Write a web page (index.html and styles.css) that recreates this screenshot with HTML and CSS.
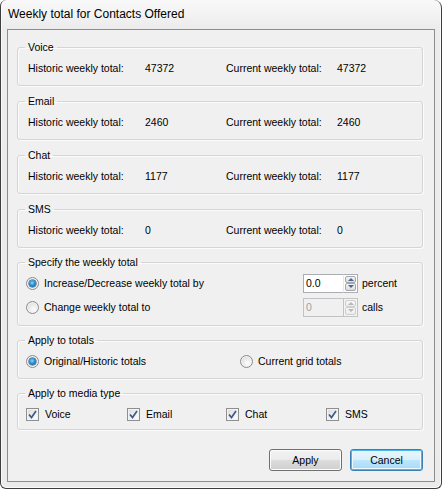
FILE: index.html
```html
<!DOCTYPE html>
<html>
<head>
<meta charset="utf-8">
<link rel="stylesheet" href="styles.css">
</head>
<body>
<div class="window">
  <div class="titlebar">Weekly total for Contacts Offered</div>
  <div class="client">
    <fieldset class="group">
      <legend>Voice</legend>
      <div class="totals"><span class="l1">Historic weekly total:</span><span class="v1">47372</span><span class="l2">Current weekly total:</span><span>47372</span></div>
    </fieldset>
    <fieldset class="group">
      <legend>Email</legend>
      <div class="totals"><span class="l1">Historic weekly total:</span><span class="v1">2460</span><span class="l2">Current weekly total:</span><span>2460</span></div>
    </fieldset>
    <fieldset class="group">
      <legend>Chat</legend>
      <div class="totals"><span class="l1">Historic weekly total:</span><span class="v1">1177</span><span class="l2">Current weekly total:</span><span>1177</span></div>
    </fieldset>
    <fieldset class="group sms">
      <legend>SMS</legend>
      <div class="totals"><span class="l1">Historic weekly total:</span><span class="v1">0</span><span class="l2">Current weekly total:</span><span>0</span></div>
    </fieldset>
    <fieldset class="group specify">
      <legend>Specify the weekly total</legend>
      <div class="opt-row">
        <label class="opt"><span class="radio checked"></span><span>Increase/Decrease weekly total by</span></label>
        <span class="spin"><span class="spin-field">0.0</span><span class="spin-btns"><span class="spin-btn"><span class="arrow up"></span></span><span class="spin-btn"><span class="arrow down"></span></span></span></span>
        <span class="unit">percent</span>
      </div>
      <div class="opt-row">
        <label class="opt"><span class="radio"></span><span>Change weekly total to</span></label>
        <span class="spin disabled"><span class="spin-field">0</span><span class="spin-btns"><span class="spin-btn"><span class="arrow up"></span></span><span class="spin-btn"><span class="arrow down"></span></span></span></span>
        <span class="unit">calls</span>
      </div>
    </fieldset>
    <fieldset class="group applyto">
      <legend>Apply to totals</legend>
      <div class="radio-row">
        <label class="opt first"><span class="radio checked"></span><span>Original/Historic totals</span></label>
        <label class="opt"><span class="radio"></span><span>Current grid totals</span></label>
      </div>
    </fieldset>
    <fieldset class="group media">
      <legend>Apply to media type</legend>
      <div class="check-row">
        <label class="chk"><span class="check"><svg width="11" height="11" viewBox="0 0 11 11"><path d="M2 5.5 L4.5 8.5 L9 2" fill="none" stroke="#3d5a8c" stroke-width="1.7"/></svg></span><span>Voice</span></label>
        <label class="chk"><span class="check"><svg width="11" height="11" viewBox="0 0 11 11"><path d="M2 5.5 L4.5 8.5 L9 2" fill="none" stroke="#3d5a8c" stroke-width="1.7"/></svg></span><span>Email</span></label>
        <label class="chk"><span class="check"><svg width="11" height="11" viewBox="0 0 11 11"><path d="M2 5.5 L4.5 8.5 L9 2" fill="none" stroke="#3d5a8c" stroke-width="1.7"/></svg></span><span>Chat</span></label>
        <label class="chk"><span class="check"><svg width="11" height="11" viewBox="0 0 11 11"><path d="M2 5.5 L4.5 8.5 L9 2" fill="none" stroke="#3d5a8c" stroke-width="1.7"/></svg></span><span>SMS</span></label>
      </div>
    </fieldset>
    <div class="buttons">
      <button class="btn">Apply</button>
      <button class="btn default">Cancel</button>
    </div>
  </div>
</div>
</body>
</html>
```

FILE: styles.css
```css
* { box-sizing: border-box; }
html, body { margin: 0; padding: 0; background: #ffffff; }
body {
  font-family: "Liberation Sans", Arial, sans-serif;
  font-size: 10.5px;
  color: #000;
}
.window {
  width: 442px;
  height: 489px;
  border: 1px solid #3e3e3e;
  border-top: none;
  border-radius: 6px 8px 6px 6px;
  background: linear-gradient(#f9f9f9 0px, #ececec 28px, #ebebeb 100%);
  box-shadow: inset 1px 0 0 #fafafa, inset -1px 0 0 #fafafa, inset 0 -1px 0 #fafafa;
  display: flex;
  flex-direction: column;
  padding: 0 6px 6px 6px;
}
.titlebar {
  height: 29px;
  padding: 7px 0 0 1px;
  font-size: 12px;
  line-height: 15px;
  color: #000;
}
.client {
  flex: 1;
  border: 1px solid #8d8d8d;
  background: #f0f0f0;
  padding: 11px 11px 0 9px;
  display: flex;
  flex-direction: column;
}
.group {
  margin: 0 0 9px 0;
  padding: 8px 0 10px 0;
  border: 1px solid #d5d5d5;
  border-radius: 3px;
  box-shadow: inset 1px 1px 0 #fbfbfb, 1px 1px 0 #fbfbfb;
  min-width: 0;
}
.group.sms { margin-bottom: 8px; }
.group legend {
  margin-left: 7px;
  padding: 0 3px;
  line-height: 13px;
  font-size: 10.5px;
}
.totals {
  display: flex;
  line-height: 13px;
  padding-left: 10px;
}
.totals .l1 { width: 117px; }
.totals .v1 { width: 81px; }
.totals .l2 { width: 111px; }

.specify { padding: 4px 0 8px 0; margin-bottom: 8px; }
.opt-row {
  display: flex;
  align-items: center;
  height: 20px;
  padding-left: 8px;
}
.opt-row + .opt-row { margin-top: 4px; }
.opt {
  display: flex;
  align-items: center;
  gap: 5px;
}
.opt-row .opt { width: 277px; }
.radio {
  width: 13px;
  height: 13px;
  border-radius: 50%;
  border: 1px solid #8b8c8c;
  background: radial-gradient(circle at 60% 65%, #fdfdfd 0%, #e6e6e6 55%, #cfcfcf 100%);
  box-shadow: inset 0 0 0 1px #f4f4f4;
  display: flex;
  align-items: center;
  justify-content: center;
  flex: none;
}
.radio.checked::after {
  content: "";
  width: 7px;
  height: 7px;
  border-radius: 50%;
  background: radial-gradient(circle at 45% 40%, #8fd4fa 0%, #2d8fd4 45%, #0c4c86 100%);
  box-shadow: 0 0 0 0.5px #1b4f7d;
}
.spin {
  display: flex;
  height: 19px;
}
.spin-field {
  width: 40px;
  height: 19px;
  border: 1px solid #abadb3;
  border-right: none;
  background: #fff;
  padding: 2px 0 0 2px;
  line-height: 13px;
}
.spin-btns {
  width: 15px;
  height: 19px;
  border: 1px solid #abadb3;
  border-left: 1px solid #e3e9ef;
  background: #fff;
  display: flex;
  flex-direction: column;
  padding: 1px;
}
.spin-btn {
  flex: 1;
  border: 1px solid #a3a6ab;
  border-radius: 2px;
  background: linear-gradient(#f4f4f4, #dcdcdc);
  display: flex;
  align-items: center;
  justify-content: center;
}
.arrow {
  width: 0;
  height: 0;
  border-left: 3px solid transparent;
  border-right: 3px solid transparent;
}
.arrow.up { border-bottom: 3px solid #4e6690; }
.arrow.down { border-top: 3px solid #4e6690; }
.spin.disabled .spin-field {
  background: #f0f0f0;
  color: #a0a0a0;
  border-color: #c3c3c3;
}
.spin.disabled .spin-btns { border-color: #c3c3c3; background: #f4f4f4; }
.spin.disabled .spin-btn { border-color: #cfcfcf; background: linear-gradient(#f7f7f7, #ececec); }
.spin.disabled .arrow.up { border-bottom-color: #b8b8b8; }
.spin.disabled .arrow.down { border-top-color: #b8b8b8; }
.unit { margin-left: 4px; }

.applyto { padding: 7px 0 10px 0; margin-bottom: 8px; }
.radio-row {
  display: flex;
  align-items: center;
  height: 14px;
  padding-left: 8px;
}
.radio-row .first { width: 214px; }

.media { padding: 7px 0 8px 0; }
.check-row {
  display: grid;
  grid-template-columns: 101px 99px 100px auto;
  align-items: center;
  height: 14px;
  padding-left: 8px;
}
.chk {
  display: flex;
  align-items: center;
  gap: 6px;
}
.check {
  width: 13px;
  height: 13px;
  border: 1px solid #8e8f8f;
  background: linear-gradient(135deg, #d9d9d9, #f6f6f6 70%, #ffffff);
  box-shadow: inset 0 0 0 1px #f2f2f2;
  display: flex;
  align-items: center;
  justify-content: center;
  flex: none;
}
.check svg { display: block; }

.buttons {
  display: flex;
  justify-content: flex-end;
  gap: 8px;
  margin-top: 10px;
}
.btn {
  width: 73px;
  height: 22px;
  border: 1px solid #707070;
  border-radius: 3px;
  font-family: "Liberation Sans", Arial, sans-serif;
  font-size: 10.5px;
  color: #000;
  padding: 0;
  background: linear-gradient(#f2f2f2 0%, #ebebeb 50%, #dddddd 51%, #cfcfcf 100%);
  box-shadow: inset 0 0 0 1px #fcfcfc;
}
.btn.default {
  border-color: #3c7fb1;
  background: linear-gradient(#eaf6fd 0%, #d9f0fc 50%, #bee6fd 51%, #a7d9f5 100%);
  box-shadow: inset 0 0 0 1px #48b8ee, inset 0 0 0 2px #f0f9fe;
}
```
